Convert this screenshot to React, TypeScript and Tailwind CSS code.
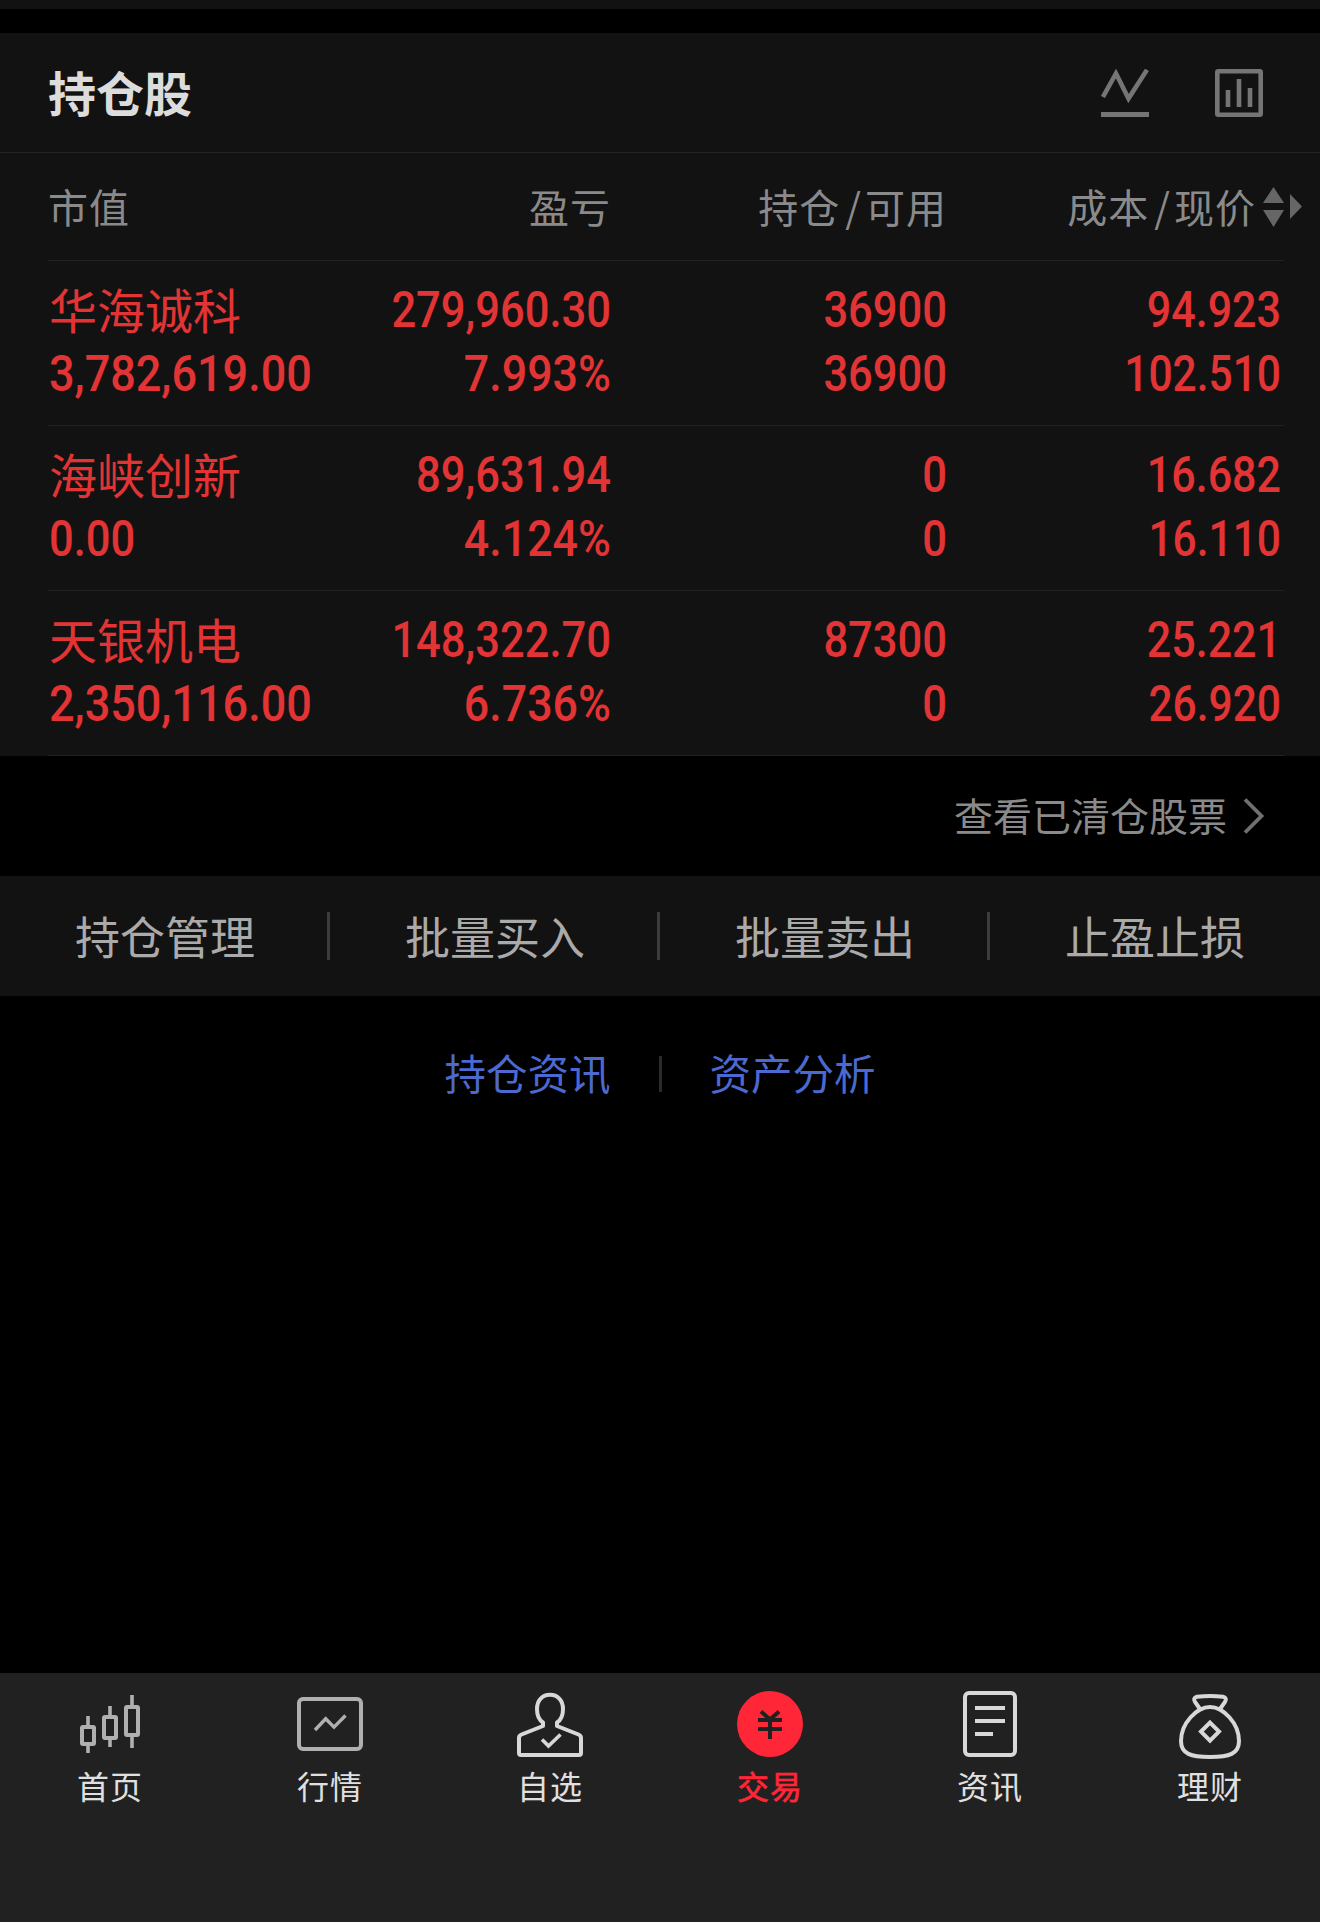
import { useState } from 'react';

type Holding = {
  name: string;
  value: string;
  profit: string;
  percent: string;
  held: string;
  available: string;
  cost: string;
  price: string;
};

const holdings: Holding[] = [
  { name: '华海诚科', value: '3,782,619.00', profit: '279,960.30', percent: '7.993%', held: '36900', available: '36900', cost: '94.923', price: '102.510' },
  { name: '海峡创新', value: '0.00', profit: '89,631.94', percent: '4.124%', held: '0', available: '0', cost: '16.682', price: '16.110' },
  { name: '天银机电', value: '2,350,116.00', profit: '148,322.70', percent: '6.736%', held: '87300', available: '0', cost: '25.221', price: '26.920' },
];

const actions = ['持仓管理', '批量买入', '批量卖出', '止盈止损'];

function HomeIcon() {
  return (
    <svg width="72" height="72" viewBox="0 0 72 72" fill="none" stroke="#b0b0b0" strokeWidth="4">
      <rect x="8" y="37" width="12" height="17" rx="1" />
      <path d="M14 26v10M14 55v8" strokeWidth="3.6" />
      <rect x="30" y="27" width="12" height="21" rx="1" />
      <path d="M36 16v10M36 49v8" strokeWidth="3.6" />
      <rect x="52" y="17" width="12" height="28" rx="1" />
      <path d="M58 5v11M58 46v12" strokeWidth="3.6" />
    </svg>
  );
}

function MarketIcon() {
  return (
    <svg width="72" height="72" viewBox="0 0 72 72" fill="none" stroke="#b0b0b0" strokeWidth="4">
      <rect x="5" y="9" width="62" height="50" rx="4" />
      <path d="M21 40l10.700-11.200L40 37.200 51.500 25.500" strokeWidth="3.4" />
    </svg>
  );
}

function WatchIcon() {
  return (
    <svg width="72" height="72" viewBox="0 0 72 72" fill="none" stroke="#d8d8d8" strokeWidth="4" strokeLinejoin="round">
      <path d="M29 32.500C25 30 23 25 23 19 23 10 28.500 4.800 36 4.800S49 10 49 19c0 6-2 11-6 13.500v3.500l21.500 8.500q2.500 1 2.500 3.500v15q0 2-2 2H7q-2 0-2-2V48q0-2.500 2.500-3.500L29 36z" />
      <path d="M28 49.500l6.500 6.500 12-11.500" strokeWidth="3.6" strokeLinejoin="miter" />
    </svg>
  );
}

function TradeIcon() {
  return (
    <svg width="72" height="72" viewBox="0 0 72 72" fill="none" stroke="#212121" strokeWidth="4">
      <circle cx="36" cy="34" r="33" fill="#ff2637" stroke="none" />
      <path d="M27 21.500l9 8 9-8M24 30h24M24 39h24M36 29v20" />
    </svg>
  );
}

function NewsIcon() {
  return (
    <svg width="72" height="72" viewBox="0 0 72 72" fill="none" stroke="#d8d8d8" strokeWidth="4">
      <rect x="11" y="3" width="50" height="62" rx="4" />
      <path d="M21 18h30M21 31h30M21 44h18" />
    </svg>
  );
}

function WealthIcon() {
  return (
    <svg width="72" height="72" viewBox="0 0 72 72" fill="none" stroke="#d8d8d8" strokeWidth="4">
      <path d="M36 17C23 17 7 33 7 51c0 13 10 16 29 16s29-3 29-16C65 33 49 17 36 17z" />
      <path d="M26 19l-5-7q-2.500-4 2-5.200Q36 5 49 6.800q4.500 1.200 2 5.200L46 19" />
      <path d="M36 32.600l9 9-9 9-9-9z" />
    </svg>
  );
}

const tabs = [
  { label: '首页', Icon: HomeIcon },
  { label: '行情', Icon: MarketIcon },
  { label: '自选', Icon: WatchIcon },
  { label: '交易', Icon: TradeIcon },
  { label: '资讯', Icon: NewsIcon },
  { label: '理财', Icon: WealthIcon },
];

function Num({ children, fit = 'origin-right text-right scale-x-[0.87]' }: { children: string; fit?: string }) {
  return (
    <div className={`h-16 leading-[64px] font-[Roboto] text-[50px] font-medium whitespace-nowrap ${fit}`}>
      {children}
    </div>
  );
}

export default function App() {
  const [active, setActive] = useState('交易');

  return (
    <div className="w-[1320px] h-[1922px] bg-black flex flex-col overflow-hidden font-['Noto_Sans_CJK_SC',sans-serif]">
      <div className="h-[9px] bg-[#121212] mb-6 shrink-0" />

      <section className="bg-[#121212]">
        <header className="h-[120px] flex items-center justify-between pl-12 pr-[57px] border-b border-[#242424]">
          <h1 className="pb-1 text-[48px] font-bold text-[#dcdcdc]">持仓股</h1>
          <div className="flex gap-[66px]">
            <svg width="48" height="48" viewBox="0 0 48 48" fill="none" stroke="#757575" strokeWidth="4.600">
              <path d="M2 28L15 4.500 27.500 29.500 46 .8" />
              <path d="M0 45.500h48" strokeWidth="5" />
            </svg>
            <svg width="48" height="48" viewBox="0 0 48 48" fill="none" stroke="#757575" strokeWidth="4.600">
              <rect x="2.300" y="2.300" width="43.400" height="43.400" rx="1" />
              <path d="M13 21v17M24 10v28M35 19v19" />
            </svg>
          </div>
        </header>

        <div className="ml-12 mr-9">
          <div className="h-[108px] flex items-center text-[40px] text-[#8a8a8a] border-b border-[#222222] tracking-[1px]">
            <div className="w-[262px] shrink-0 pb-0.5">市值</div>
            <div className="w-[301px] shrink-0 pb-0.5 text-right">盈亏</div>
            <div className="w-[336px] shrink-0 pb-0.5 text-right">持仓<span className="pl-[5px] pr-[3px]">/</span>可用</div>
            <div className="w-[309px] shrink-0 pb-0.5 text-right">成本<span className="pl-[5px] pr-[3px]">/</span>现价</div>
            <svg className="shrink-0 ml-[7px]" width="40" height="40" viewBox="0 0 40 40" fill="#666666">
              <path d="M10.500 0L21 16H0zM0 23h21L10.500 40zM27 7l12 12.500L27 32z" />
            </svg>
          </div>

          {holdings.map((h) => (
            <div key={h.name} className="h-[165px] flex pt-[17px] text-[#e23434] border-b border-[#222222]">
              <div className="w-[280px] pl-px">
                <div className="h-16 leading-[60px] text-[48px]">{h.name}</div>
                <Num fit={h.value.length > 4 ? 'origin-left scale-x-[0.9]' : 'origin-left scale-x-[0.87]'}>{h.value}</Num>
              </div>
              <div className="w-[283px]">
                <Num>{h.profit}</Num>
                <Num fit="origin-right text-right scale-x-[0.895]">{h.percent}</Num>
              </div>
              <div className="w-[336px]">
                <Num>{h.held}</Num>
                <Num>{h.available}</Num>
              </div>
              <div className="w-[334px]">
                <Num fit="origin-right text-right scale-x-[0.86]">{h.cost}</Num>
                <Num fit="origin-right text-right scale-x-[0.85]">{h.price}</Num>
              </div>
            </div>
          ))}
        </div>
      </section>

      <button className="h-[120px] shrink-0 flex items-center justify-end pr-[55px] text-[39px] text-[#8a8a8a]">
        <span className="pb-1">查看已清仓股票</span>
        <svg className="ml-4" width="22" height="36" viewBox="0 0 22 36" fill="none" stroke="#707070" strokeWidth="3.800">
          <path d="M2 1.500L18.500 18 2 34.500" />
        </svg>
      </button>

      <div className="h-[120px] shrink-0 bg-[#121212] flex items-center">
        {actions.map((a, i) => (
          <button
            key={a}
            className={`w-[330px] h-12 flex items-center justify-center text-[45px] text-[#aaaaaa] ${i < 3 ? 'pl-[3px] border-r-[3px] border-[#3c3c3c]' : ''}`}
          >
            <span className="pb-px">{a}</span>
          </button>
        ))}
      </div>

      <div className="mt-[54px] h-12 flex items-center justify-center text-[41.5px] text-[#4b69cf]">
        <a className="pb-[3px]">持仓资讯</a>
        <span className="w-[3px] h-9 mx-[48px] bg-[#2a2a2a]" />
        <a className="pb-[3px]">资产分析</a>
      </div>

      <nav className="mt-auto h-[249px] bg-[#212121] flex pt-[17px]">
        {tabs.map(({ label, Icon }) => (
          <button
            key={label}
            onClick={() => setActive(label)}
            className={`w-[220px] flex flex-col items-center text-[32px] leading-[46px] tracking-[1px] ${active === label ? 'text-[#ff2637] [-webkit-text-stroke:0.7px]' : 'text-[#e0e0e0]'}`}
          >
            <Icon />
            <span>{label}</span>
          </button>
        ))}
      </nav>
    </div>
  );
}
